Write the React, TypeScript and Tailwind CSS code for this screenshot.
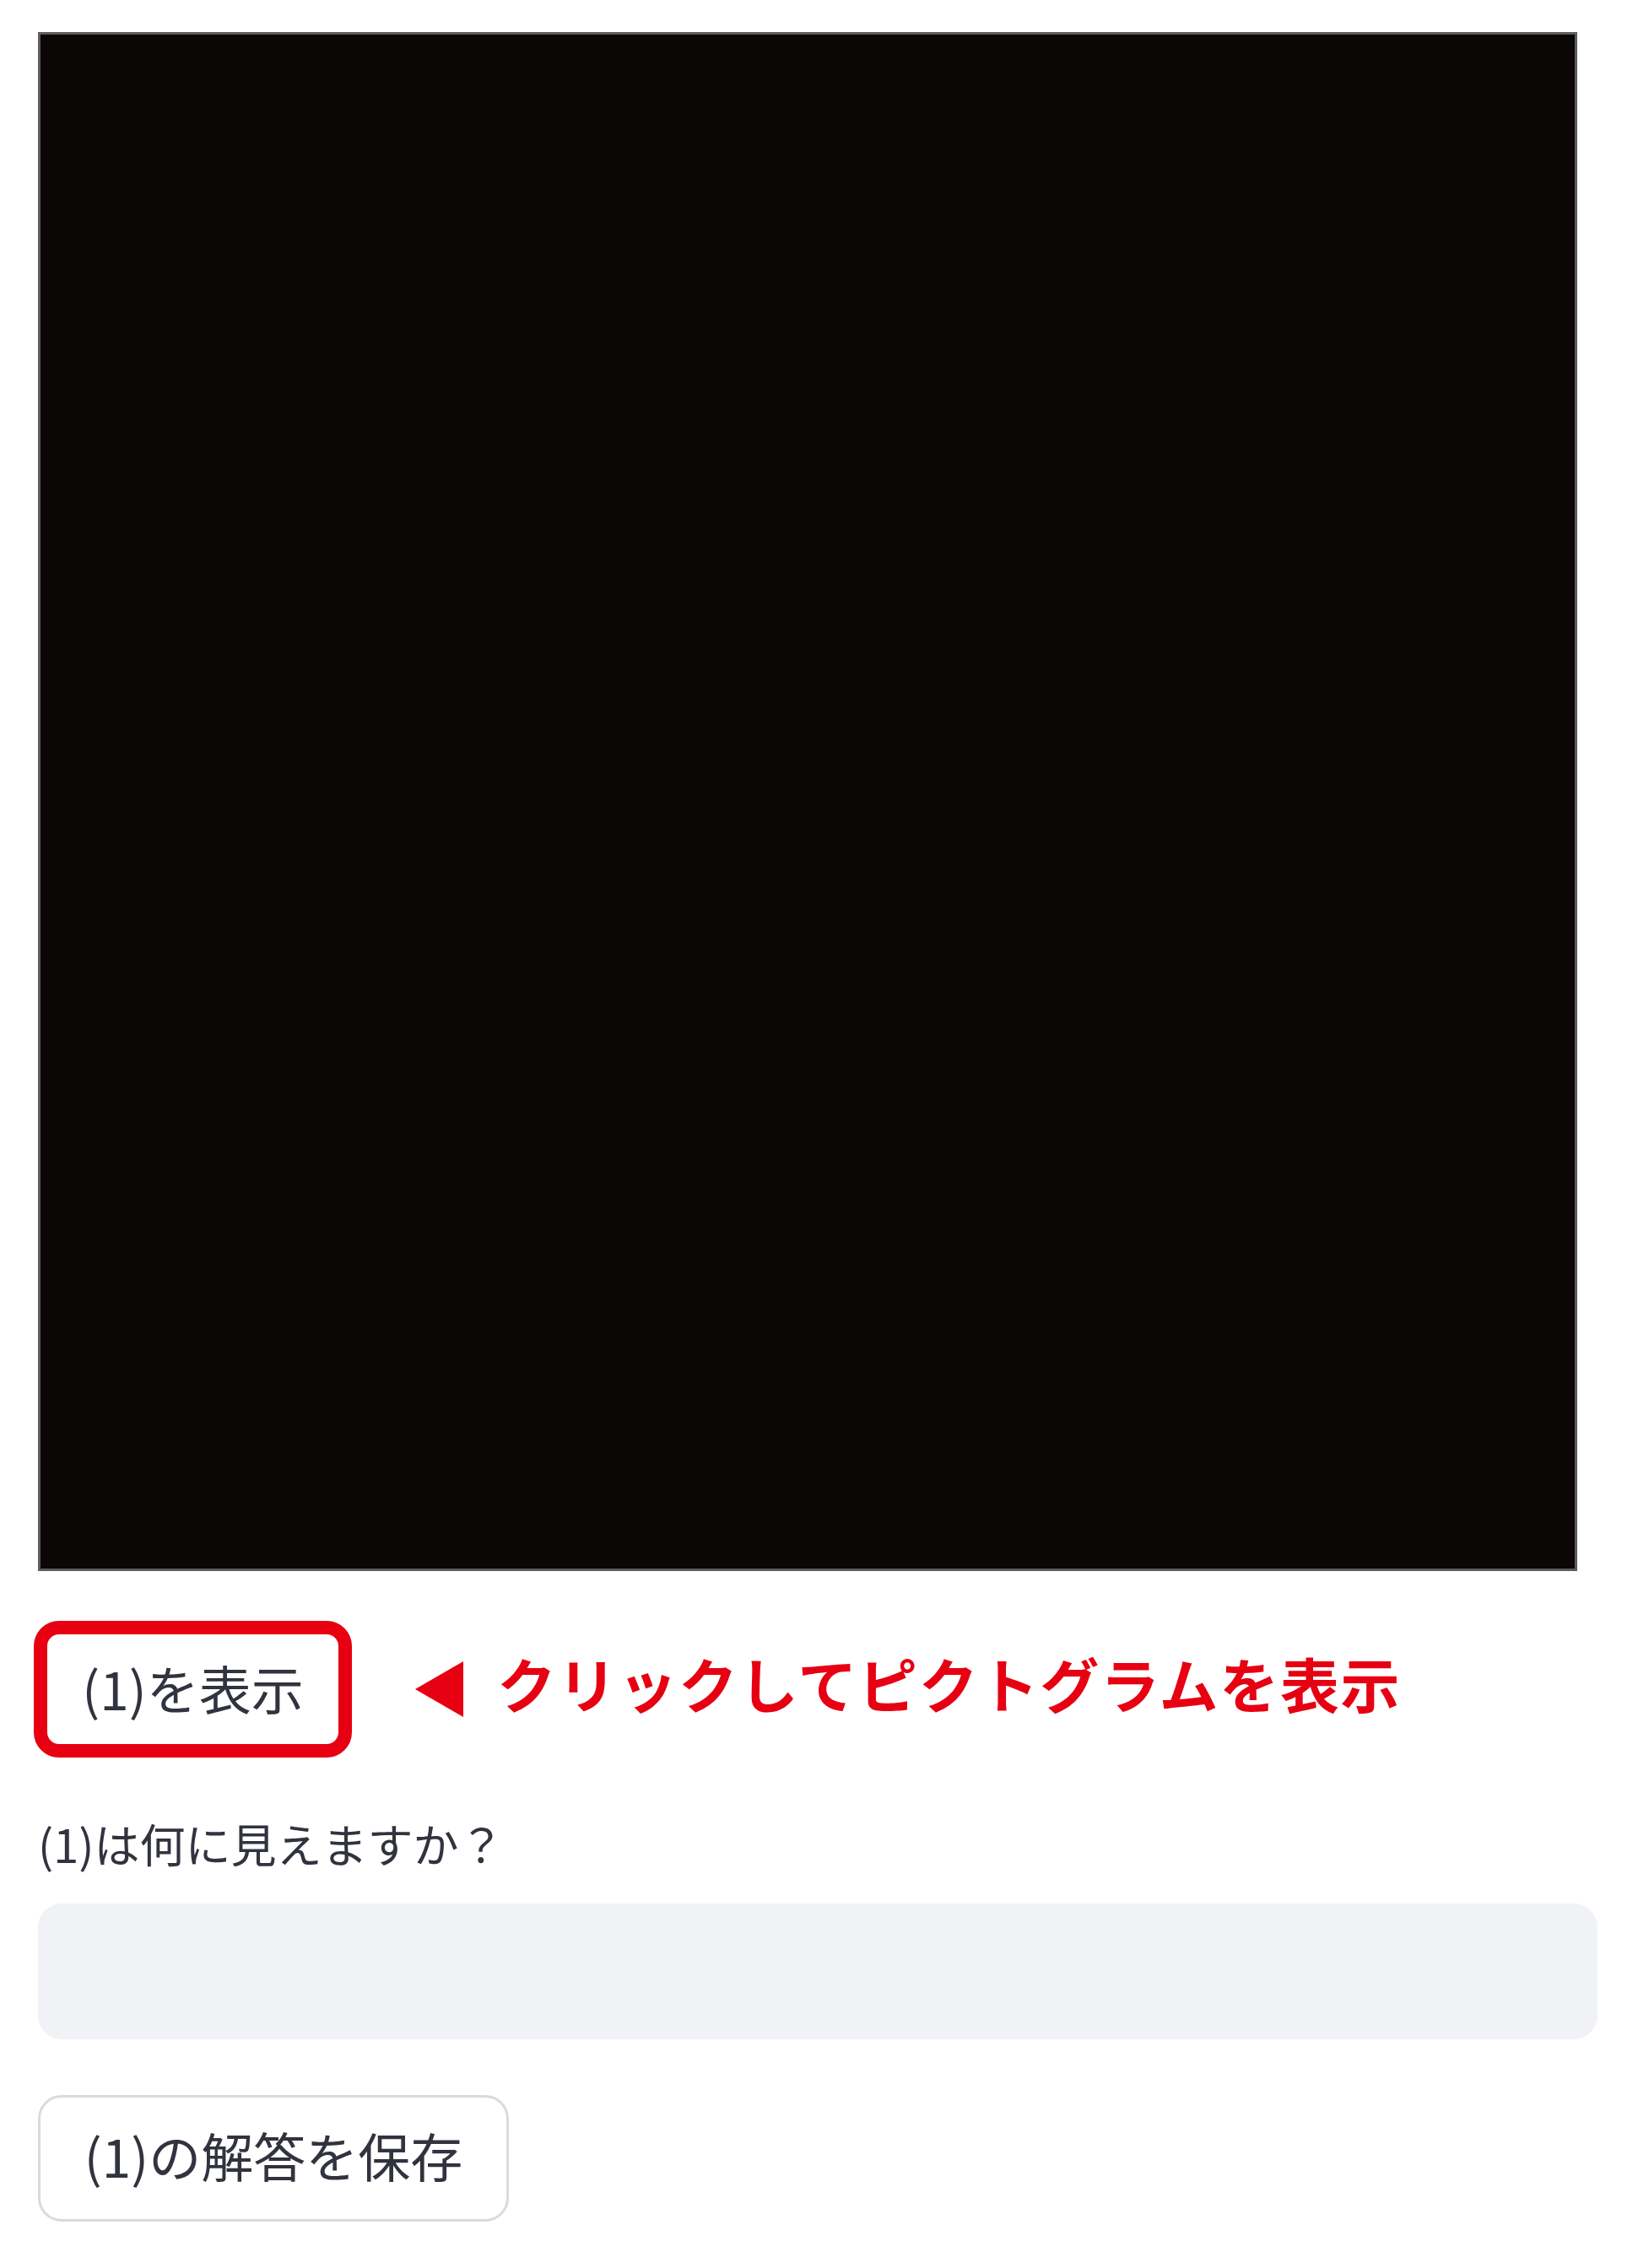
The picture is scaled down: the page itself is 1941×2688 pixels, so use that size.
import React from 'react';

const font = "font-['Noto_Sans_CJK_JP','Noto_Sans',sans-serif]";

export default function App() {
    return (
        <div className={`w-[1941px] min-h-[2688px] bg-white pl-[45px] pt-[38px] text-[#31333f] ${font}`}>
            {/* pictogram canvas */}
            <div className="w-[1824px] h-[1824px] bg-[#0a0706] border-[3px] border-[#5e5c5b]"></div>

            {/* show button with annotation */}
            <div className="flex items-center mt-[59px] -ml-[5px]">
                <button className="w-[377px] h-[162px] rounded-[30px] border-[16px] border-[#e60012] bg-white flex items-center justify-center pb-[5px] text-[62px] leading-none text-[#31333f]">
                    (1)を表示
                </button>
                <svg width="57" height="66" viewBox="0 0 57 66" className="ml-[75px]">
                    <polygon points="57,0 57,66 0,33" fill="#e60012" />
                </svg>
                <span className="ml-[40px] mb-[14px] text-[70px] leading-none font-bold tracking-[1.7px] text-[#e60012]">
                    クリックしてピクトグラムを表示
                </span>
            </div>

            {/* answer input */}
            <div className="mt-[75px] text-[54px] leading-none">(1)は何に見えますか？</div>
            <div className="mt-[44px] w-[1848px] h-[161px] rounded-[28px] bg-[#f0f2f6]"></div>

            <button className="mt-[66px] w-[558px] h-[150px] rounded-[28px] border-[3px] border-[#d9dadf] bg-white flex items-center justify-center pb-[8px] text-[62px] leading-none text-[#31333f]">
                (1)の解答を保存
            </button>
        </div>
    );
}
